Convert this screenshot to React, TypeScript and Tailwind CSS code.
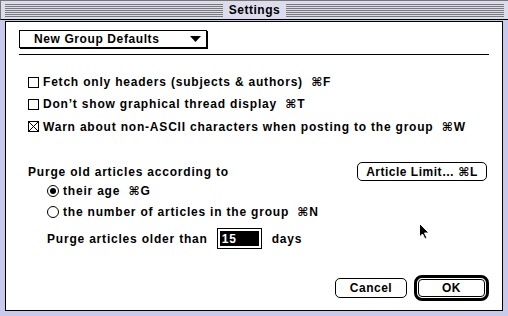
import React from "react";

const font = { fontFamily: '"Liberation Sans", "DejaVu Sans", sans-serif' };

function Checkbox({ checked }: { checked?: boolean }) {
  return (
    <svg width="11" height="11" viewBox="0 0 11 11" className="shrink-0">
      <rect x="0.5" y="0.5" width="10" height="10" fill="white" stroke="black" />
      {checked && (
        <path d="M1 1 L10 10 M10 1 L1 10" stroke="black" strokeWidth="1" shapeRendering="crispEdges" />
      )}
    </svg>
  );
}

function Radio({ checked }: { checked?: boolean }) {
  return (
    <svg width="12" height="12" viewBox="0 0 12 12" className="shrink-0">
      <circle cx="6" cy="6" r="5.5" fill="white" stroke="black" />
      {checked && <circle cx="6" cy="6" r="3" fill="black" />}
    </svg>
  );
}

export default function App() {
  return (
    <div
      className="w-[508px] h-[316px] bg-[#c9c9ec] flex flex-col relative overflow-hidden text-black text-[12px] font-bold"
      style={font}
    >
      {/* Title bar */}
      <div className="h-[20px] flex items-center pl-[4px] pr-[4px] bg-[#dcdcec] border-t border-l border-[#777] border-b border-b-black">
        <div className="flex-1 h-[13px] bg-[repeating-linear-gradient(to_bottom,#7a7a7a_0px,#7a7a7a_1px,transparent_1px,transparent_2px)]" />
        <div className="px-[6px] leading-none tracking-[0.5px]">Settings</div>
        <div className="flex-1 h-[13px] bg-[repeating-linear-gradient(to_bottom,#7a7a7a_0px,#7a7a7a_1px,transparent_1px,transparent_2px)]" />
      </div>

      {/* Content */}
      <div className="flex-1 ml-[5px] mr-[5px] mb-[5px] mt-[1px] border border-black bg-white flex flex-col px-[13px] pt-[8px] pb-[9px] tracking-[0.8px]">
        {/* popup */}
        <div className="w-[188px] h-[18px] border border-black shadow-[1px_1px_0_#000] flex items-center justify-between pl-[14px] pr-[5px] tracking-[0.6px]">
          <span>New Group Defaults</span>
          <svg width="11" height="6" viewBox="0 0 11 6">
            <path d="M0 0 H11 L5.5 6 Z" fill="black" />
          </svg>
        </div>
        <div className="mt-[6px] h-px bg-black" />

        {/* checkboxes */}
        <div className="mt-[16px] pl-[9px] flex flex-col">
          <div className="h-[22px] flex items-center gap-[4px]">
            <Checkbox />
            <span>Fetch only headers (subjects &amp; authors)&nbsp;&nbsp;⌘F</span>
          </div>
          <div className="h-[22px] flex items-center gap-[4px]">
            <Checkbox />
            <span>Don’t show graphical thread display&nbsp;&nbsp;⌘T</span>
          </div>
          <div className="h-[23px] flex items-center gap-[4px]">
            <Checkbox checked />
            <span>Warn about non-ASCII characters when posting to the group&nbsp;&nbsp;⌘W</span>
          </div>
        </div>

        {/* purge */}
        <div className="mt-[24px] pl-[9px] pr-[2px] h-[19px] flex items-center justify-between">
          <span>Purge old articles according to</span>
          <div className="w-[130px] h-[19px] border border-black rounded-[5px] flex items-center justify-center tracking-[0.5px]">
            Article Limit…&nbsp;⌘L
          </div>
        </div>
        <div className="pl-[28px] flex flex-col">
          <div className="h-[20px] flex items-center gap-[4px]">
            <Radio checked />
            <span>their age&nbsp;&nbsp;⌘G</span>
          </div>
          <div className="h-[21px] flex items-center gap-[4px]">
            <Radio />
            <span>the number of articles in the group&nbsp;&nbsp;⌘N</span>
          </div>
        </div>
        <div className="mt-[6px] pl-[28px] h-[21px] flex items-center">
          <span>Purge articles older than</span>
          <div className="ml-[9px] w-[45px] h-[21px] border border-black p-[2px] flex">
            <div className="flex-1 bg-black text-white flex items-center pl-[2px]">15</div>
          </div>
          <span className="ml-[10px]">days</span>
        </div>

        {/* buttons */}
        <div className="mt-auto flex justify-end items-center gap-[7px] tracking-[0.5px]">
          <div className="w-[72px] h-[20px] border border-black rounded-[5px] flex items-center justify-center">
            Cancel
          </div>
          <div className="w-[75px] h-[26px] border-[3px] border-black rounded-[8px] p-px flex">
            <div className="flex-1 border border-black rounded-[4px] flex items-center justify-center">OK</div>
          </div>
        </div>
      </div>

      {/* cursor */}
      <svg className="absolute left-[419px] top-[223px]" width="11" height="17" viewBox="0 0 11 17">
        <path d="M0.5 0.5 V14 L3.5 11 L6 16 L8 15 L5.5 10 H10 Z" fill="black" stroke="white" strokeWidth="1" />
      </svg>
    </div>
  );
}
